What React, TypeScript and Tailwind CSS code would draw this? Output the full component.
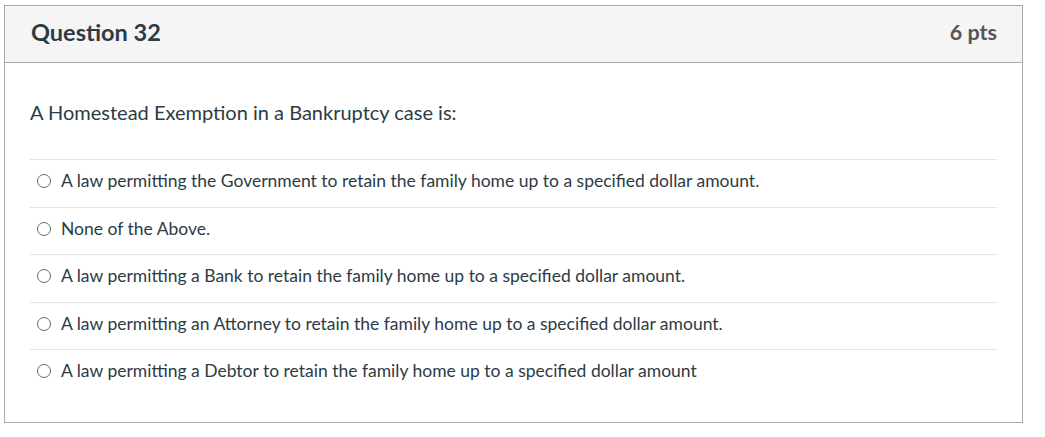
const answers = [
  "A law permitting the Government to retain the family home up to a specified dollar amount.",
  "None of the Above.",
  "A law permitting a Bank to retain the family home up to a specified dollar amount.",
  "A law permitting an Attorney to retain the family home up to a specified dollar amount.",
  "A law permitting a Debtor to retain the family home up to a specified dollar amount",
];

export default function App() {
  return (
    <div className="min-h-[437px] bg-white pl-[4px] pt-[5px] font-['Lato','Liberation_Sans',sans-serif] text-[#2d3b45]">
      <div className="w-[1019px] h-[418px] border border-[#a8a8a8]">
        <div className="flex h-[57px] items-center justify-between border-b border-[#a8a8a8] bg-[#f5f5f5] pb-[3px] pl-[26px] pr-[25px]">
          <h2 className="text-[23.5px] font-bold leading-none">Question 32</h2>
          <span className="text-[21.5px] font-bold leading-none text-[#555]">6 pts</span>
        </div>
        <div className="px-[25px] pt-[35px]">
          <p className="text-[20px] leading-[28px]">A Homestead Exemption in a Bankruptcy case is:</p>
          <div className="mt-[33px]">
            {answers.map((a) => (
              <label key={a} className="flex h-[47.5px] items-center border-t border-[#e3e3e3] pb-[4px] text-[17.5px]">
                <span className="ml-[7px] mr-[10px] h-[14px] w-[14px] rounded-full border border-[#6a6a6a] bg-white" />
                <span>{a}</span>
              </label>
            ))}
          </div>
        </div>
      </div>
    </div>
  );
}
